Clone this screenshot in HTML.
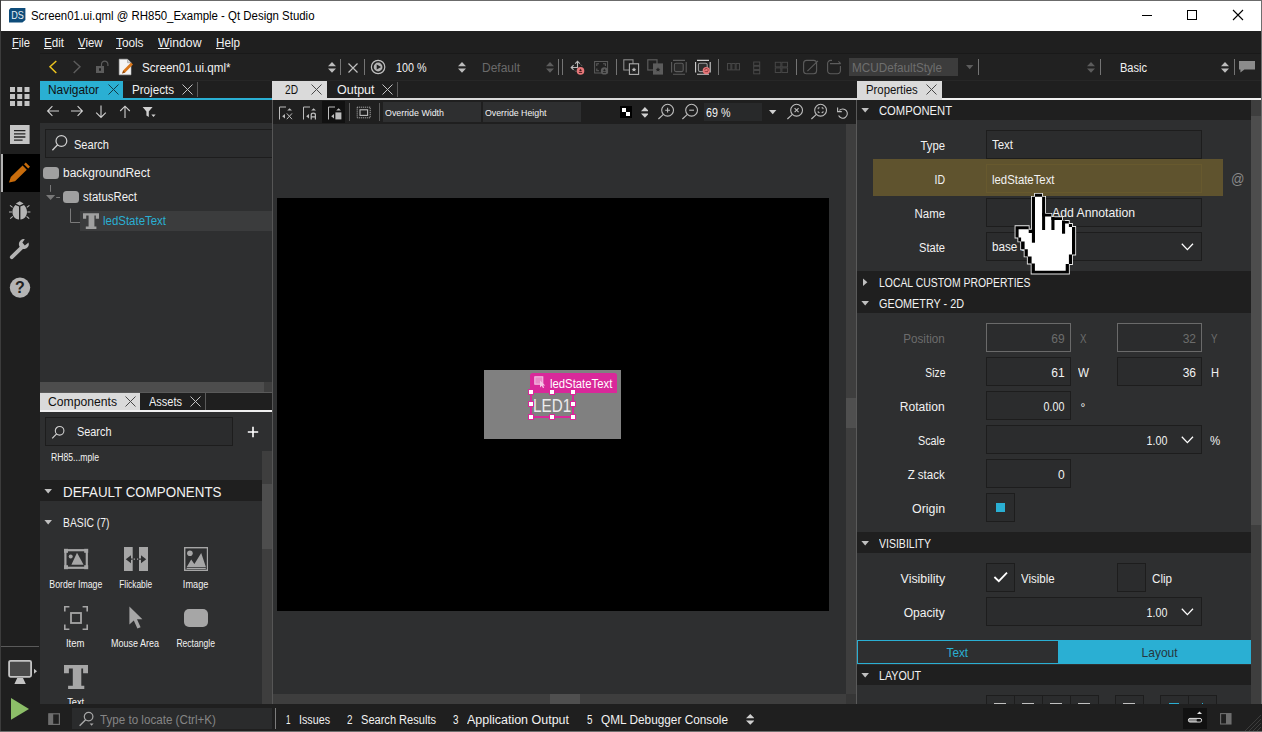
<!DOCTYPE html>
<html lang="en"><head><meta charset="utf-8"><title>Screen01.ui.qml @ RH850_Example - Qt Design Studio</title>
<style>
html,body{margin:0;padding:0;background:#1f1f1f;}
body{width:1262px;height:732px;position:relative;overflow:hidden;font-family:"Liberation Sans",sans-serif;}
body>div,body>svg,body>span{position:absolute;display:block;box-sizing:border-box;}
.t{white-space:pre;}
u{text-decoration:underline;text-underline-offset:1px;}
</style></head>
<body>
<div style="left:0px;top:0px;width:1262px;height:31px;background:#ffffff;"></div>
<div style="left:0px;top:0px;width:1262px;height:1px;background:#6b6b6b;"></div>
<svg style="left:9px;top:8px;" width="17" height="15" viewBox="0 0 17 15"><path d="M1.6 0H16.4V12L13.4 14.6H0V1.8Z" fill="#0e4c7a"/><text x="2.2" y="11.2" font-family="Liberation Sans,sans-serif" font-size="11.6" fill="#e8eef4" textLength="12.6" lengthAdjust="spacingAndGlyphs">DS</text></svg>
<span class="t" style="top:7.84px;font-size:12px;line-height:16px;color:#000;left:30.5px;transform-origin:0 50%;transform:scaleX(0.9524);">Screen01.ui.qml @ RH850_Example - Qt Design Studio</span>
<svg style="left:1140px;top:8px;" width="110" height="16" viewBox="0 0 110 16"><g stroke="#000" stroke-width="1" fill="none"><path d="M2 7.5H12"/><rect x="47.5" y="2.5" width="9" height="9"/><path d="M93 2L103 12M103 2L93 12" stroke-width="1.1"/></g></svg>
<div style="left:0px;top:31px;width:1262px;height:22px;background:#1f1f1f;"></div>
<span class="t" style="top:34.84px;font-size:12px;line-height:16px;color:#f2f2f2;left:12px;transform-origin:0 50%;transform:scaleX(0.9298);"><u>F</u>ile</span>
<span class="t" style="top:34.84px;font-size:12px;line-height:16px;color:#f2f2f2;left:44px;transform-origin:0 50%;transform:scaleX(0.9660);"><u>E</u>dit</span>
<span class="t" style="top:34.84px;font-size:12px;line-height:16px;color:#f2f2f2;left:78px;transform-origin:0 50%;transform:scaleX(0.9492);"><u>V</u>iew</span>
<span class="t" style="top:34.84px;font-size:12px;line-height:16px;color:#f2f2f2;left:116px;transform-origin:0 50%;transform:scaleX(0.9816);"><u>T</u>ools</span>
<span class="t" style="top:34.84px;font-size:12px;line-height:16px;color:#f2f2f2;left:158px;transform-origin:0 50%;transform:scaleX(1.0190);"><u>W</u>indow</span>
<span class="t" style="top:34.84px;font-size:12px;line-height:16px;color:#f2f2f2;left:216px;transform-origin:0 50%;transform:scaleX(0.9722);"><u>H</u>elp</span>
<div style="left:0px;top:53px;width:1262px;height:28px;background:#212121;"></div>
<div style="left:0px;top:53px;width:1262px;height:1px;background:#191919;"></div>
<div style="left:0px;top:80px;width:1262px;height:1px;background:#272727;"></div>
<div style="left:0px;top:53px;width:40px;height:28px;background:#1f1f1f;"></div>
<div style="left:0px;top:81px;width:40px;height:651px;background:#1f1f1f;"></div>
<div style="left:0px;top:0px;width:1px;height:732px;background:#3c3c3c;"></div>
<svg style="left:48px;top:59px;" width="12" height="16" viewBox="0 0 12 16"><path d="M8.3 2L2 7.7L8.3 14" stroke="#ebc31f" stroke-width="1.5" fill="none"/></svg>
<svg style="left:71px;top:59px;" width="12" height="16" viewBox="0 0 12 16"><path d="M2.7 2L9 7.7L2.7 14" stroke="#5c5c5c" stroke-width="1.4" fill="none"/></svg>
<svg style="left:94px;top:59px;" width="16" height="16" viewBox="0 0 16 16"><path d="M2 7H10V14H2Z M5 9.3V11.7H7V9.3Z" fill="#5c5c5c" fill-rule="evenodd"/><path d="M7.5 7V5.3A3.2 3.2 0 0 1 13.9 5.3V7" stroke="#5c5c5c" stroke-width="1.2" fill="none"/></svg>
<svg style="left:118px;top:58px;" width="17" height="18" viewBox="0 0 17 18"><path d="M1.2 1.2H9.5L13 4.7V16.8H1.2Z" fill="#f4f4f4" stroke="#bdbdbd" stroke-width=".6"/><path d="M9.5 1.2V4.7H13" fill="#d0d0d0" stroke="#9a9a9a" stroke-width=".6"/><path d="M4.2 15.4L5.2 12.4L13 4.6L15 6.6L7.2 14.4Z" fill="#d9761a"/><path d="M4.2 15.4L5.2 12.4L7.2 14.4Z" fill="#8a4a10"/></svg>
<span class="t" style="top:59.84px;font-size:12px;line-height:16px;color:#f2f2f2;left:142px;transform-origin:0 50%;transform:scaleX(0.9684);">Screen01.ui.qml*</span>
<svg style="left:327.5px;top:62px;" width="8" height="11" viewBox="0 0 8 11"><path d="M0 4.2L4.0 0L8 4.2Z M0 6.6L4.0 10.8L8 6.6Z" fill="#bcbcbc"/></svg>
<div style="left:340px;top:59px;width:1px;height:16px;background:#747474;"></div>
<svg style="left:347.5px;top:62.5px;overflow:visible;" width="10.0" height="10.0" viewBox="0 0 10.0 10.0"><path d="M.5 .5L9.5 9.5M9.5 .5L.5 9.5" stroke="#c0c0c0" stroke-width="1.2" fill="none"/></svg>
<div style="left:364px;top:59px;width:1px;height:16px;background:#747474;"></div>
<svg style="left:370px;top:59px;" width="16" height="16" viewBox="0 0 16 16"><circle cx="8.1" cy="8" r="6.7" stroke="#c0c0c0" stroke-width="1.2" fill="none"/><circle cx="8.1" cy="8" r="4.4" fill="#b4b4b4"/><path d="M6.7 5.4L11.2 8L6.7 10.6Z" fill="#222"/></svg>
<span class="t" style="top:59.84px;font-size:12px;line-height:16px;color:#f2f2f2;left:395.5px;transform-origin:0 50%;transform:scaleX(0.8962);">100 %</span>
<svg style="left:457.7px;top:62px;" width="8" height="11" viewBox="0 0 8 11"><path d="M0 4.2L4.0 0L8 4.2Z M0 6.6L4.0 10.8L8 6.6Z" fill="#bcbcbc"/></svg>
<span class="t" style="top:59.84px;font-size:12px;line-height:16px;color:#6a6a6a;left:482px;transform-origin:0 50%;">Default</span>
<svg style="left:545.9px;top:62px;" width="8" height="11" viewBox="0 0 8 11"><path d="M0 4.2L4.0 0L8 4.2Z M0 6.6L4.0 10.8L8 6.6Z" fill="#5c5c5c"/></svg>
<div style="left:558px;top:59px;width:1px;height:16px;background:#747474;"></div>
<div style="left:562px;top:59px;width:1px;height:16px;background:#747474;"></div>
<svg style="left:569px;top:58px;" width="18" height="18" viewBox="0 0 18 18"><g stroke="#bcbcbc" stroke-width="1.1" fill="none"><path d="M8.5 10V3.4M6.2 5.6L8.5 3.2L10.8 5.6"/><path d="M8.5 9.5H2.4M4.6 7.2L2.2 9.5L4.6 11.8"/><path d="M11.8 6.6L12.8 7.6M6 12.6L7 13.6" stroke-width="1" opacity=".7"/></g><circle cx="11.5" cy="12.9" r="3.8" fill="#e8787a"/><path d="M9.9 14.4H13.1" stroke="#3a1516" stroke-width=".9"/><path d="M11.5 10.6L12 11.7L13.1 11.9L12.3 12.7L11.5 13.2L10.7 12.7L9.9 11.9L11 11.7Z" fill="#3a1516"/></svg>
<svg style="left:593px;top:58px;" width="18" height="18" viewBox="0 0 18 18"><g stroke="#5c5c5c" stroke-width="1" fill="none"><rect x="1.6" y="3.5" width="13" height="11.5"/><path d="M3.8 8V5.8H6M10 5.8H12.4V8M3.8 10.6V12.8H6" stroke-width="1.1"/></g><circle cx="11.4" cy="12.9" r="3.6" fill="#5c5c5c"/><path d="M9.9 14.4H12.9" stroke="#222" stroke-width=".9"/><path d="M11.4 10.6L11.9 11.7L13 11.9L12.2 12.7L11.4 13.2L10.6 12.7L9.8 11.9L10.9 11.7Z" fill="#222"/></svg>
<div style="left:616px;top:59px;width:1px;height:16px;background:#747474;"></div>
<svg style="left:622px;top:58px;" width="18" height="18" viewBox="0 0 18 18"><g stroke-width="1.1" fill="none"><rect x="1.8" y="1.8" width="9.2" height="10.2" stroke="#8c8c8c"/><rect x="7.4" y="5.8" width="9.2" height="10.6" fill="#212121" stroke="#b0b0b0"/></g><path d="M12 9.2L12.7 10.8L14.4 10.9L13.1 12L13.5 13.6L12 12.7L10.5 13.6L10.9 12L9.6 10.9L11.3 10.8Z" fill="#bcbcbc"/></svg>
<svg style="left:646px;top:58px;" width="18" height="18" viewBox="0 0 18 18"><rect x="1.8" y="1.8" width="9.2" height="10.2" stroke="#5c5c5c" stroke-width="1.2" fill="none"/><rect x="7" y="5.4" width="10" height="11.2" fill="#5c5c5c"/><path d="M12 9.2L12.7 10.8L14.4 10.9L13.1 12L13.5 13.6L12 12.7L10.5 13.6L10.9 12L9.6 10.9L11.3 10.8Z" fill="#222"/></svg>
<svg style="left:670px;top:58px;" width="18" height="18" viewBox="0 0 18 18"><g stroke="#5c5c5c" stroke-width="1.1" fill="none"><path d="M3 2.4H15M3 16.2H15M1.6 4V14.6M16.2 4V14.6"/><rect x="4.4" y="5.2" width="8.8" height="8.4" rx="1.6" fill="#2a2a2a" stroke="#5c5c5c"/></g></svg>
<svg style="left:694px;top:58px;" width="18" height="18" viewBox="0 0 18 18"><g stroke="#d0d0d0" stroke-width="1.1" fill="none"><path d="M3 2.4H15M3 16.2H15M1.6 4V14.6M16.2 4V14.6"/><rect x="4.4" y="5.2" width="8.8" height="8.4" rx="1.6" fill="#2e2e2e" stroke="#9a9a9a"/></g></svg>
<svg style="left:702px;top:66px;" width="9" height="9" viewBox="0 0 9 9"><circle cx="4.3" cy="4.6" r="3.6" fill="#e8787a"/><path d="M2.7 5.6H5.9M2.7 4.2A1.7 1.7 0 1 1 5.3 5.5" stroke="#7a2a2c" stroke-width=".7" fill="none"/></svg>
<div style="left:718px;top:59px;width:1px;height:16px;background:#747474;"></div>
<svg style="left:726px;top:62px;" width="15" height="10" viewBox="0 0 15 10"><g stroke="#474747" stroke-width="1" fill="none"><rect x="1.5" y="1.5" width="3.4" height="6.4"/><rect x="5.8" y="1.5" width="3.4" height="6.4"/><rect x="10.1" y="1.5" width="3.4" height="6.4"/></g></svg>
<svg style="left:752px;top:61px;" width="10" height="14" viewBox="0 0 10 14"><g stroke="#474747" stroke-width="1" fill="none"><rect x="1.7" y="1" width="6" height="3.4"/><rect x="1.7" y="5.2" width="6" height="3.4"/><rect x="1.7" y="9.4" width="6" height="3.4"/></g></svg>
<svg style="left:774px;top:61px;" width="15" height="13" viewBox="0 0 15 13"><g stroke="#474747" stroke-width="1" fill="none"><rect x="1.3" y="1.3" width="5.6" height="4.6"/><rect x="7.9" y="1.3" width="5.6" height="4.6"/><rect x="1.3" y="6.9" width="5.6" height="4.6"/><rect x="7.9" y="6.9" width="5.6" height="4.6"/></g></svg>
<div style="left:796px;top:59px;width:1px;height:16px;background:#747474;"></div>
<svg style="left:802px;top:58px;" width="18" height="18" viewBox="0 0 18 18"><g stroke="#5c5c5c" stroke-width="1.1" fill="none"><rect x="1.6" y="2.4" width="13" height="13.4" rx="3"/><path d="M5.4 13.2L16 2.8"/></g></svg>
<svg style="left:826px;top:58px;" width="18" height="18" viewBox="0 0 18 18"><g stroke="#5c5c5c" stroke-width="1.1" fill="none"><path d="M14.4 8V12.8A3 3 0 0 1 11.4 15.8H4.6A3 3 0 0 1 1.6 12.8V5.4A3 3 0 0 1 4.6 2.4H6"/><path d="M4 5.6H14.6M12.4 3.4L14.8 5.6"/></g></svg>
<div style="left:849px;top:58px;width:109px;height:18px;background:#3c3c3c;"></div>
<span class="t" style="top:59.84px;font-size:12px;line-height:16px;color:#6e6e6e;left:851.5px;transform-origin:0 50%;transform:scaleX(0.9779);">MCUDefaultStyle</span>
<svg style="left:966px;top:65px;" width="8" height="5" viewBox="0 0 8 5"><path d="M0 0H7.4L3.7 4.2Z" fill="#5c5c5c"/></svg>
<div style="left:978px;top:59px;width:1px;height:16px;background:#747474;"></div>
<svg style="left:1087px;top:62px;" width="8" height="11" viewBox="0 0 8 11"><path d="M0 4.2L4.0 0L8 4.2Z M0 6.6L4.0 10.8L8 6.6Z" fill="#5c5c5c"/></svg>
<div style="left:1100px;top:59px;width:1px;height:16px;background:#747474;"></div>
<span class="t" style="top:59.84px;font-size:12px;line-height:16px;color:#f2f2f2;left:1120px;transform-origin:0 50%;transform:scaleX(0.9201);">Basic</span>
<svg style="left:1221px;top:62px;" width="8" height="11" viewBox="0 0 8 11"><path d="M0 4.2L4.0 0L8 4.2Z M0 6.6L4.0 10.8L8 6.6Z" fill="#bcbcbc"/></svg>
<div style="left:1234px;top:59px;width:1px;height:16px;background:#747474;"></div>
<svg style="left:1238px;top:60px;" width="18" height="14" viewBox="0 0 18 14"><path d="M1 1H17V9.4H6.4L2.4 12.6V9.4H1Z" fill="#8c8c8c"/></svg>
<div style="left:40px;top:81px;width:1222px;height:19px;background:#1f1f1f;"></div>
<div style="left:40px;top:81px;width:83px;height:17.5px;background:#2aafd3;"></div>
<div style="left:40px;top:97.5px;width:232px;height:2.5px;background:#2aafd3;"></div>
<span class="t" style="top:81.84px;font-size:12px;line-height:16px;color:#101010;left:48px;transform-origin:0 50%;transform:scaleX(0.9930);">Navigator</span>
<svg style="left:108px;top:84px;overflow:visible;" width="11" height="11" viewBox="0 0 11 11"><path d="M.5 .5L10.5 10.5M10.5 .5L.5 10.5" stroke="#123c48" stroke-width="1" fill="none"/></svg>
<span class="t" style="top:81.84px;font-size:12px;line-height:16px;color:#f2f2f2;left:132px;transform-origin:0 50%;transform:scaleX(0.9686);">Projects</span>
<svg style="left:182px;top:84px;overflow:visible;" width="11" height="11" viewBox="0 0 11 11"><path d="M.5 .5L10.5 10.5M10.5 .5L.5 10.5" stroke="#c4c4c4" stroke-width="1" fill="none"/></svg>
<div style="left:197px;top:82px;width:1px;height:15px;background:#5a5a5a;"></div>
<div style="left:272px;top:98px;width:585px;height:2px;background:#dadada;"></div>
<div style="left:272px;top:81px;width:55px;height:19px;background:#dadada;"></div>
<span class="t" style="top:81.84px;font-size:12px;line-height:16px;color:#101010;left:284.5px;transform-origin:0 50%;transform:scaleX(0.8473);">2D</span>
<svg style="left:311px;top:84px;overflow:visible;" width="11" height="11" viewBox="0 0 11 11"><path d="M.5 .5L10.5 10.5M10.5 .5L.5 10.5" stroke="#484848" stroke-width="1" fill="none"/></svg>
<span class="t" style="top:81.84px;font-size:12px;line-height:16px;color:#f2f2f2;left:336.5px;transform-origin:0 50%;transform:scaleX(1.0408);">Output</span>
<svg style="left:381.5px;top:84px;overflow:visible;" width="11.0" height="11" viewBox="0 0 11.0 11"><path d="M.5 .5L10.5 10.5M10.5 .5L.5 10.5" stroke="#c4c4c4" stroke-width="1" fill="none"/></svg>
<div style="left:397px;top:82px;width:1px;height:15px;background:#5a5a5a;"></div>
<div style="left:857px;top:98px;width:404px;height:2px;background:#f0f0f0;"></div>
<div style="left:857px;top:81px;width:85px;height:19px;background:#dadada;"></div>
<span class="t" style="top:81.84px;font-size:12px;line-height:16px;color:#101010;left:865.7px;transform-origin:0 50%;transform:scaleX(0.9469);">Properties</span>
<svg style="left:926px;top:84px;overflow:visible;" width="11" height="11" viewBox="0 0 11 11"><path d="M.5 .5L10.5 10.5M10.5 .5L.5 10.5" stroke="#484848" stroke-width="1" fill="none"/></svg>
<div style="left:40px;top:100px;width:232px;height:23px;background:#1f1f1f;"></div>
<svg style="left:46px;top:104px;" width="14" height="14" viewBox="0 0 14 14"><path d="M13 7H1.6M6.4 2.2L1.6 7L6.4 11.8" stroke="#d0d0d0" stroke-width="1.1" fill="none"/></svg>
<svg style="left:69.5px;top:104px;" width="14" height="14" viewBox="0 0 14 14"><path d="M1 7H12.4M7.6 2.2L12.4 7L7.6 11.8" stroke="#d0d0d0" stroke-width="1.1" fill="none"/></svg>
<svg style="left:93.5px;top:105px;" width="14" height="14" viewBox="0 0 14 14"><path d="M7 .6V12.4M2.2 7.6L7 12.4L11.8 7.6" stroke="#d0d0d0" stroke-width="1.1" fill="none"/></svg>
<svg style="left:117.5px;top:105px;" width="14" height="14" viewBox="0 0 14 14"><path d="M7 13V1.2M2.2 6L7 1.2L11.8 6" stroke="#d0d0d0" stroke-width="1.1" fill="none"/></svg>
<svg style="left:142px;top:106px;" width="15" height="13" viewBox="0 0 15 13"><path d="M.6 1H10.6L6.8 5.6V11L4.4 9.4V5.6Z" fill="#d0d0d0"/><path d="M9.4 8.6H13.6L11.5 11Z" fill="#d0d0d0"/></svg>
<div style="left:40px;top:123px;width:232px;height:269px;background:#2e2f30;"></div>
<div style="left:45px;top:129px;width:232px;height:29px;background:#2b2c2d;border:1px solid #1d1d1d;"></div>
<div style="left:272px;top:100px;width:1px;height:632px;background:#565656;"></div>
<svg style="left:51px;top:134px;" width="18" height="18" viewBox="0 0 18 18"><circle cx="10.4" cy="7" r="5.4" stroke="#d0d0d0" stroke-width="1.2" fill="none"/><path d="M6.6 10.8L1.4 16.2" stroke="#d0d0d0" stroke-width="1.3"/></svg>
<span class="t" style="top:136.84px;font-size:12px;line-height:16px;color:#f2f2f2;left:74px;transform-origin:0 50%;transform:scaleX(0.9203);">Search</span>
<div style="left:43px;top:167px;width:16px;height:12px;background:#a0a0a0;border-radius:3.5px;"></div>
<span class="t" style="top:164.84px;font-size:12px;line-height:16px;color:#f2f2f2;left:63px;transform-origin:0 50%;transform:scaleX(0.9955);">backgroundRect</span>
<svg style="left:44px;top:185px;" width="20" height="18" viewBox="0 0 20 18"><path d="M6.5 0V6.8" stroke="#787878" stroke-width="1"/><path d="M2 10H11.2L6.6 15Z" fill="#787878"/><path d="M12.2 12.5H16" stroke="#787878" stroke-width="1"/></svg>
<div style="left:63px;top:191px;width:16px;height:12px;background:#a0a0a0;border-radius:3.5px;"></div>
<span class="t" style="top:188.84px;font-size:12px;line-height:16px;color:#f2f2f2;left:83px;transform-origin:0 50%;transform:scaleX(0.9523);">statusRect</span>
<div style="left:80px;top:211px;width:192px;height:20px;background:#3b3c3d;"></div>
<svg style="left:66px;top:207px;" width="16" height="18" viewBox="0 0 16 18"><path d="M4.5 1.5V15.5H14" stroke="#7a7a7a" stroke-width="1" fill="none"/></svg>
<svg style="left:83px;top:213px;" width="16" height="16" viewBox="0 0 16 16"><path d="M0 .2H16V5.8H12.8V2.6H11.4V13.6H13.4V16H2.8V13.6H5.6V2.6H3.2V5.8H0Z" fill="#a0a0a0"/></svg>
<span class="t" style="top:213.34px;font-size:12px;line-height:16px;color:#2aafd3;left:103px;transform-origin:0 50%;transform:scaleX(0.9539);">ledStateText</span>
<div style="left:40px;top:382px;width:224px;height:10px;background:#4d4d4d;"></div>
<div style="left:264px;top:382px;width:8px;height:10px;background:#3e3e3e;"></div>
<div style="left:40px;top:392px;width:232px;height:1px;background:#5a5a5a;"></div>
<div style="left:40px;top:393px;width:232px;height:17px;background:#1f1f1f;"></div>
<div style="left:40px;top:393px;width:100px;height:17px;background:#dadada;"></div>
<div style="left:40px;top:410px;width:232px;height:2px;background:#f0f0f0;"></div>
<span class="t" style="top:394.44px;font-size:12px;line-height:16px;color:#101010;left:48px;transform-origin:0 50%;transform:scaleX(1.0140);">Components</span>
<svg style="left:125px;top:395.5px;overflow:visible;" width="11" height="11.0" viewBox="0 0 11 11.0"><path d="M.5 .5L10.5 10.5M10.5 .5L.5 10.5" stroke="#484848" stroke-width="1" fill="none"/></svg>
<span class="t" style="top:394.44px;font-size:12px;line-height:16px;color:#f2f2f2;left:149px;transform-origin:0 50%;transform:scaleX(0.9163);">Assets</span>
<svg style="left:189.5px;top:395.5px;overflow:visible;" width="11.0" height="11.0" viewBox="0 0 11.0 11.0"><path d="M.5 .5L10.5 10.5M10.5 .5L.5 10.5" stroke="#c4c4c4" stroke-width="1" fill="none"/></svg>
<div style="left:205px;top:393px;width:1px;height:17px;background:#5a5a5a;"></div>
<div style="left:40px;top:412px;width:232px;height:292px;background:#2e2f30;"></div>
<div style="left:45px;top:417px;width:188px;height:29px;background:#2b2c2d;border:1px solid #1d1d1d;"></div>
<svg style="left:51px;top:425px;" width="15" height="15" viewBox="0 0 15 15"><circle cx="8.6" cy="5.8" r="4.3" stroke="#d0d0d0" stroke-width="1.1" fill="none"/><path d="M5.6 8.8L1.2 13.4" stroke="#d0d0d0" stroke-width="1.2"/></svg>
<span class="t" style="top:423.84px;font-size:12px;line-height:16px;color:#f2f2f2;left:77px;transform-origin:0 50%;transform:scaleX(0.9071);">Search</span>
<svg style="left:247px;top:426px;" width="12" height="12" viewBox="0 0 12 12"><path d="M6 .8V11.2M.8 6H11.2" stroke="#fff" stroke-width="1.6"/></svg>
<span class="t" style="top:450.54px;font-size:10px;line-height:13px;color:#f2f2f2;left:51px;transform-origin:0 50%;transform:scaleX(0.8636);">RH85...mple</span>
<div style="left:262px;top:451px;width:10px;height:253px;background:#3e3e3e;"></div>
<div style="left:262px;top:484px;width:10px;height:65px;background:#4d4d4d;"></div>
<div style="left:40px;top:480px;width:222px;height:21px;background:#1f1f1f;"></div>
<svg style="left:44px;top:489px;" width="9" height="5" viewBox="0 0 9 5"><path d="M.4 0H8L4.2 4.4Z" fill="#c0c0c0"/></svg>
<span class="t" style="top:483.44px;font-size:14.6px;line-height:19px;color:#f2f2f2;left:62.5px;transform-origin:0 50%;transform:scaleX(0.9162);">DEFAULT COMPONENTS</span>
<svg style="left:44px;top:520px;" width="9" height="5" viewBox="0 0 9 5"><path d="M.4 0H8L4.2 4.4Z" fill="#c0c0c0"/></svg>
<span class="t" style="top:514.63px;font-size:12.6px;line-height:16px;color:#f2f2f2;left:62.5px;transform-origin:0 50%;transform:scaleX(0.8203);">BASIC (7)</span>
<svg style="left:63px;top:547px;" width="26" height="24" viewBox="0 0 26 24"><rect x="2.4" y="3.2" width="21.4" height="17.6" stroke="#a6a6a6" stroke-width="2.2" fill="none"/><g fill="#a6a6a6"><rect x="1" y="1.8" width="4" height="4"/><rect x="21.2" y="1.8" width="4" height="4"/><rect x="1" y="18.2" width="4" height="4"/><rect x="21.2" y="18.2" width="4" height="4"/><circle cx="7.7" cy="9.6" r="2"/><path d="M8.4 17.8L14 5.8L20.6 17.8Z"/></g></svg>
<svg style="left:124px;top:547px;" width="24" height="24" viewBox="0 0 24 24"><path d="M0 0H8.7V24H0Z M15 0H24V24H15Z" fill="#a6a6a6"/><path d="M7 8.2V16.2L1.8 12.2Z M17 8.2V16.2L22.2 12.2Z" fill="#2e2f30"/><path d="M6.6 12.2H8.7M15 12.2H17.4" stroke="#2e2f30" stroke-width="1.3"/><path d="M9.6 12.2H11M13 12.2H14.2" stroke="#a6a6a6" stroke-width="1.2"/></svg>
<svg style="left:184px;top:547px;" width="24" height="24" viewBox="0 0 24 24"><rect x=".7" y=".7" width="22.8" height="22.6" stroke="#a6a6a6" stroke-width="1.4" fill="none"/><g fill="#a6a6a6"><circle cx="5.9" cy="6.3" r="2.8"/><path d="M2.6 20.2L7.2 12.4L10.4 17L17.2 6L22 20.2Z"/><rect x="2.6" y="21" width="19.2" height="1"/></g></svg>
<svg style="left:64px;top:606px;" width="24" height="24" viewBox="0 0 24 24"><g stroke="#a6a6a6" stroke-width="1.6" fill="none"><path d="M.8 5.4V.8H5.4M18.6 .8H23.2V5.4M23.2 18.6V23.2H18.6M5.4 23.2H.8V18.6"/><rect x="7" y="7" width="10" height="10" stroke-width="1.8"/></g></svg>
<svg style="left:128px;top:605px;" width="16" height="26" viewBox="0 0 16 26"><path d="M1.4 1.4V19.4L5.8 15.4L9.4 23.6L12.6 22.2L9 14.2H14.4Z" fill="#a6a6a6"/></svg>
<div style="left:184px;top:609px;width:24px;height:18px;background:#a6a6a6;border-radius:5px;"></div>
<svg style="left:64px;top:664.5px;" width="24" height="24" viewBox="0 0 24 24"><path d="M0 0H24V8.3H19.1V3.4H17.3V20.7H20.3V24H4.1V20.7H8.8V3.4H4.9V8.3H0Z" fill="#a6a6a6"/></svg>
<span class="t" style="top:576.86px;font-size:10.5px;line-height:14px;color:#f2f2f2;left:43.69px;transform-origin:50% 50%;transform:scaleX(0.8330);">Border Image</span>
<span class="t" style="top:576.86px;font-size:10.5px;line-height:14px;color:#f2f2f2;left:114.78px;transform-origin:50% 50%;transform:scaleX(0.7964);">Flickable</span>
<span class="t" style="top:576.86px;font-size:10.5px;line-height:14px;color:#f2f2f2;left:180.71px;transform-origin:50% 50%;transform:scaleX(0.8737);">Image</span>
<span class="t" style="top:635.86px;font-size:10.5px;line-height:14px;color:#f2f2f2;left:64.59px;transform-origin:50% 50%;transform:scaleX(0.9059);">Item</span>
<span class="t" style="top:635.86px;font-size:10.5px;line-height:14px;color:#f2f2f2;left:106.98px;transform-origin:50% 50%;transform:scaleX(0.8564);">Mouse Area</span>
<span class="t" style="top:635.86px;font-size:10.5px;line-height:14px;color:#f2f2f2;left:171.66px;transform-origin:50% 50%;transform:scaleX(0.8143);">Rectangle</span>
<span class="t" style="top:695.36px;font-size:10.5px;line-height:14px;color:#f2f2f2;left:65.87px;transform-origin:50% 50%;transform:scaleX(0.8824);">Text</span>
<svg style="left:10px;top:87px;" width="20" height="19" viewBox="0 0 20 19"><rect x="0" y="0" width="5" height="5" fill="#c4c4c4"/><rect x="0" y="7" width="5" height="5" fill="#c4c4c4"/><rect x="0" y="14" width="5" height="5" fill="#c4c4c4"/><rect x="7.2" y="0" width="5" height="5" fill="#c4c4c4"/><rect x="7.2" y="7" width="5" height="5" fill="#c4c4c4"/><rect x="7.2" y="14" width="5" height="5" fill="#c4c4c4"/><rect x="14.5" y="0" width="5" height="5" fill="#c4c4c4"/><rect x="14.5" y="7" width="5" height="5" fill="#c4c4c4"/><rect x="14.5" y="14" width="5" height="5" fill="#c4c4c4"/></svg>
<svg style="left:10px;top:125px;" width="20" height="19" viewBox="0 0 20 19"><rect width="19.6" height="19" fill="#c4c4c4"/><path d="M4 5.6H15.4M4 8.8H15.4M4 12H15.4M4 15.2H12.6" stroke="#222" stroke-width="1.3"/></svg>
<div style="left:1px;top:154px;width:39px;height:38px;background:#000;"></div>
<div style="left:1px;top:154px;width:2px;height:38px;background:#b4b4b4;"></div>
<svg style="left:8px;top:162px;" width="24" height="22" viewBox="0 0 24 22"><path d="M1 20.6L2.8 15L14.6 3.6L18.8 7.8L7 19.2Z M16 2.2L17.8 .6L22 4.8L20.2 6.4Z" fill="#c86c0c"/></svg>
<svg style="left:9px;top:200px;" width="22" height="21" viewBox="0 0 22 21"><g fill="#b4b4b4"><path d="M10.7 1.2L14.6 3.4L10.7 5.4L6.8 3.4Z"/><path d="M10 6.6V19.6C5.6 19 3.4 15.6 3.4 12C3.4 8.6 5 6.6 6.4 5Z M11.4 6.6V19.6C15.8 19 18 15.6 18 12C18 8.6 16.4 6.6 15 5Z"/></g><g stroke="#b4b4b4" stroke-width="1.1"><path d="M3.6 7.4L1 5.4M3 12H0M3.8 16.4L1.2 18.6M17.8 7.4L20.4 5.4M18.4 12H21.4M17.6 16.4L20.2 18.6"/></g></svg>
<svg style="left:9px;top:238px;" width="22" height="22" viewBox="0 0 22 22"><path d="M2.8 19.2L12.6 9.6" stroke="#b4b4b4" stroke-width="3.8" stroke-linecap="round"/><path d="M19.6 4.6A5 5 0 1 1 15.8 1.2L13.4 4.6L15.8 7.4L19.6 4.6Z" fill="#b4b4b4"/></svg>
<svg style="left:9px;top:277px;" width="22" height="22" viewBox="0 0 22 22"><circle cx="11" cy="10.6" r="10.2" fill="#b4b4b4"/><text x="11" y="16" font-family="Liberation Sans,sans-serif" font-size="16" font-weight="700" fill="#222" text-anchor="middle">?</text></svg>
<div style="left:1px;top:646px;width:38px;height:1px;background:#5a5a5a;"></div>
<svg style="left:7px;top:659px;" width="32" height="26" viewBox="0 0 32 26"><rect x="2.1" y="1.8" width="22" height="16" rx="1.5" fill="#4a4a4a" stroke="#c4c4c4" stroke-width="1.8"/><path d="M10.2 19L7.4 25H18.8L16 19Z" fill="#c4c4c4"/><path d="M27 9.8V14.8L30 12.3Z" fill="#c4c4c4"/></svg>
<svg style="left:10px;top:697px;" width="20" height="24" viewBox="0 0 20 24"><path d="M1 1V22.8L19 11.9Z" fill="#8cbe68"/></svg>
<div style="left:273px;top:100px;width:583px;height:24px;background:#1f1f1f;"></div>
<svg style="left:278px;top:104.5px;" width="16" height="16" viewBox="0 0 16 16"><g stroke="#bdbdbd" stroke-width="1" fill="none"><path d="M1.5 14.5V2H8" /></g><path d="M4.2 11.2L7 9V13.4Z" fill="#bdbdbd"/><path d="M9.2 5.6L11.6 3.2L14 5.6Z" fill="#bdbdbd"/><path d="M8.8 8.4L14 14.2M14 8.4L8.8 14.2" stroke="#bdbdbd" stroke-width="1"/></svg>
<svg style="left:302px;top:104.5px;" width="16" height="16" viewBox="0 0 16 16"><g stroke="#bdbdbd" stroke-width="1" fill="none"><path d="M1.5 14.5V2H8" /></g><path d="M4.2 11.2L7 9V13.4Z" fill="#bdbdbd"/><path d="M9.2 5.6L11.6 3.2L14 5.6Z" fill="#bdbdbd"/><path d="M9.2 14.4V10Q9.2 8.2 11.3 8.2Q13.4 8.2 13.4 10V14.4M9.2 11.8H13.4" stroke="#bdbdbd" stroke-width="1.2" fill="none"/></svg>
<div style="left:322px;top:101px;width:23px;height:22px;background:#111;"></div>
<svg style="left:326.5px;top:104.5px;" width="16" height="16" viewBox="0 0 16 16"><g stroke="#bdbdbd" stroke-width="1" fill="none"><path d="M1.5 14.5V2H8" /></g><path d="M4.2 11.2L7 9V13.4Z" fill="#bdbdbd"/><path d="M9.2 5.6L11.6 3.2L14 5.6Z" fill="#bdbdbd"/><rect x="8.4" y="7.4" width="6" height="7" fill="#bdbdbd"/></svg>
<div style="left:349px;top:103px;width:1px;height:18px;background:#5a5a5a;"></div>
<svg style="left:356px;top:106px;" width="16" height="13" viewBox="0 0 16 13"><rect x="1.2" y="1.2" width="13" height="10.6" stroke="#bdbdbd" stroke-width="1" stroke-dasharray="1 1" fill="none"/><rect x="4" y="3.8" width="7.6" height="5.6" stroke="#bdbdbd" stroke-width="1.1" fill="none"/></svg>
<div style="left:379px;top:103px;width:1px;height:18px;background:#5a5a5a;"></div>
<div style="left:383px;top:102px;width:98px;height:20px;background:#2e2f30;"></div>
<div style="left:483px;top:102px;width:98px;height:20px;background:#2e2f30;"></div>
<span class="t" style="top:106.87px;font-size:9.6px;line-height:12px;color:#f2f2f2;left:385px;transform-origin:0 50%;transform:scaleX(0.9221);">Override Width</span>
<span class="t" style="top:106.87px;font-size:9.6px;line-height:12px;color:#f2f2f2;left:485px;transform-origin:0 50%;transform:scaleX(0.9153);">Override Height</span>
<svg style="left:620px;top:106px;" width="12" height="12" viewBox="0 0 12 12"><rect width="12" height="12" fill="#000"/><rect x="2" y="2" width="4" height="4" fill="#fff"/><rect x="6" y="6" width="4" height="4" fill="#fff"/></svg>
<svg style="left:640.7px;top:107px;" width="7.8" height="11" viewBox="0 0 7.8 11"><path d="M0 4.2L3.9 0L7.8 4.2Z M0 6.6L3.9 10.8L7.8 6.6Z" fill="#d0d0d0"/></svg>
<svg style="left:657px;top:103px;" width="18" height="18" viewBox="0 0 18 18"><g stroke="#bdbdbd" stroke-width="1.1" fill="none"><circle cx="10.6" cy="7.2" r="5.9"/><path d="M6.4 11.4L1.4 16"/><g transform="translate(0 .2)"><path d="M10.6 4.6V9.4M8.2 7H13"/></g></g></svg>
<svg style="left:681px;top:103px;" width="18" height="18" viewBox="0 0 18 18"><g stroke="#bdbdbd" stroke-width="1.1" fill="none"><circle cx="10.6" cy="7.2" r="5.9"/><path d="M6.4 11.4L1.4 16"/><g transform="translate(0 .2)"><path d="M8.2 7H13"/></g></g></svg>
<div style="left:704px;top:103px;width:58px;height:18px;background:#28292a;"></div>
<span class="t" style="top:104.50px;font-size:12.4px;line-height:16px;color:#f2f2f2;left:706.4px;transform-origin:0 50%;transform:scaleX(0.8637);">69 %</span>
<svg style="left:769.4px;top:110px;" width="8" height="5" viewBox="0 0 8 5"><path d="M0 0H7.4L3.7 4.2Z" fill="#d0d0d0"/></svg>
<svg style="left:786px;top:103px;" width="18" height="18" viewBox="0 0 18 18"><g stroke="#bdbdbd" stroke-width="1.1" fill="none"><circle cx="10.6" cy="7.2" r="5.9"/><path d="M6.4 11.4L1.4 16"/><g transform="translate(0 .2)"><path d="M8.6 5L12.6 9M12.6 5L8.6 9"/></g></g></svg>
<svg style="left:810px;top:103px;" width="18" height="18" viewBox="0 0 18 18"><g stroke="#bdbdbd" stroke-width="1.1" fill="none"><circle cx="10.6" cy="7.2" r="5.9"/><path d="M6.4 11.4L1.4 16"/><g transform="translate(0 .2)"><path d="M8.2 6V4.6H9.6M11.6 4.6H13V6M13 8V9.4H11.6M9.6 9.4H8.2V8" stroke-width="1"/></g></g></svg>
<svg style="left:837px;top:105.5px;" width="12" height="14" viewBox="0 0 12 14"><path d="M2.4 4.4A4.6 4.6 0 1 1 1.6 9.6" stroke="#bdbdbd" stroke-width="1.1" fill="none"/><path d="M.6 1.4V5.6H4.8" stroke="#bdbdbd" stroke-width="1.1" fill="none"/></svg>
<div style="left:273px;top:124px;width:583px;height:570px;background:#2e2f30;"></div>
<div style="left:277px;top:198px;width:552px;height:413px;background:#000;"></div>
<div style="left:484px;top:370px;width:137px;height:69px;background:#808080;"></div>
<div style="left:530px;top:373px;width:87px;height:20px;background:#d9289a;border-radius:2.5px 2.5px 0 0;"></div>
<svg style="left:534px;top:376px;" width="12" height="12" viewBox="0 0 12 12"><rect x=".8" y=".8" width="8" height="7.4" fill="#e98ac8" stroke="#f6c6e6" stroke-width="1"/><path d="M6 4.6V11.4L7.8 9.8L9 12.2L10.2 11.6L9 9.4H11.2Z" fill="#f6c6e6"/></svg>
<span class="t" style="top:376.04px;font-size:12px;line-height:16px;color:#fff;left:549.7px;transform-origin:0 50%;transform:scaleX(0.9433);">ledStateText</span>
<span class="t" style="top:394.60px;font-size:17.6px;line-height:23px;color:#ececec;left:532.6px;transform-origin:0 50%;transform:scaleX(0.8656);">LED1</span>
<div style="left:530.2px;top:391.2px;width:43.6px;height:26.6px;border:2px solid #d9289a;"></div>
<div style="left:528px;top:389px;width:6px;height:6px;background:#fff;border:1px solid #d9289a;"></div>
<div style="left:528px;top:401px;width:6px;height:6px;background:#fff;border:1px solid #d9289a;"></div>
<div style="left:528px;top:414px;width:6px;height:6px;background:#fff;border:1px solid #d9289a;"></div>
<div style="left:549px;top:389px;width:6px;height:6px;background:#fff;border:1px solid #d9289a;"></div>
<div style="left:549px;top:414px;width:6px;height:6px;background:#fff;border:1px solid #d9289a;"></div>
<div style="left:570px;top:389px;width:6px;height:6px;background:#fff;border:1px solid #d9289a;"></div>
<div style="left:570px;top:401px;width:6px;height:6px;background:#fff;border:1px solid #d9289a;"></div>
<div style="left:570px;top:414px;width:6px;height:6px;background:#fff;border:1px solid #d9289a;"></div>
<div style="left:846px;top:124px;width:10px;height:570px;background:#3e3e3e;"></div>
<div style="left:846px;top:398px;width:10px;height:30px;background:#4f4f4f;"></div>
<div style="left:273px;top:694px;width:573px;height:10px;background:#3e3e3e;"></div>
<div style="left:549.5px;top:694px;width:30px;height:10px;background:#4f4f4f;"></div>
<div style="left:846px;top:694px;width:10px;height:10px;background:#363636;"></div>
<div style="left:856px;top:100px;width:1px;height:604px;background:#5a5a5a;"></div>
<div style="left:857px;top:100px;width:394px;height:604px;background:#2e2f30;"></div>
<div style="left:857px;top:100px;width:394px;height:20px;background:#1f1f1f;"></div>
<svg style="left:861px;top:108.0px;" width="9" height="5" viewBox="0 0 9 5"><path d="M.4 0H8L4.2 4.4Z" fill="#c0c0c0"/></svg>
<span class="t" style="top:102.74px;font-size:12.3px;line-height:16px;color:#f2f2f2;left:879px;transform-origin:0 50%;transform:scaleX(0.9132);">COMPONENT</span>
<div style="left:986px;top:130px;width:216px;height:29px;background:#2b2c2d;border:1px solid #1d1d1d;"></div>
<span class="t" style="top:137.84px;font-size:12px;line-height:16px;color:#f2f2f2;right:317px;transform-origin:100% 50%;transform:scaleX(0.9417);">Type</span>
<span class="t" style="top:136.84px;font-size:12px;line-height:16px;color:#f2f2f2;left:992px;transform-origin:0 50%;transform:scaleX(0.9539);">Text</span>
<div style="left:873px;top:159px;width:350px;height:37px;background:#5f532e;"></div>
<div style="left:986px;top:164px;width:216px;height:29px;background:#5f532e;border:1px solid #67592e;"></div>
<span class="t" style="top:171.84px;font-size:12px;line-height:16px;color:#f2f2f2;right:317px;transform-origin:100% 50%;transform:scaleX(0.8750);">ID</span>
<span class="t" style="top:171.84px;font-size:12px;line-height:16px;color:#f2f2f2;left:992px;transform-origin:0 50%;transform:scaleX(0.9463);">ledStateText</span>
<span class="t" style="top:169.65px;font-size:14px;line-height:18px;color:#8a8a8a;left:1230.5px;transform-origin:0 50%;transform:scaleX(0.9495);">@</span>
<div style="left:986px;top:198px;width:216px;height:29px;background:#2b2c2d;border:1px solid #1d1d1d;"></div>
<span class="t" style="top:206.34px;font-size:12px;line-height:16px;color:#f2f2f2;right:317px;transform-origin:100% 50%;transform:scaleX(0.9527);">Name</span>
<span class="t" style="top:204.70px;font-size:12.4px;line-height:16px;color:#f2f2f2;left:1052px;transform-origin:0 50%;transform:scaleX(0.9874);">Add Annotation</span>
<div style="left:986px;top:232px;width:216px;height:29px;background:#2b2c2d;border:1px solid #1d1d1d;"></div>
<span class="t" style="top:239.84px;font-size:12px;line-height:16px;color:#f2f2f2;right:317px;transform-origin:100% 50%;transform:scaleX(0.9275);">State</span>
<span class="t" style="top:239.34px;font-size:12px;line-height:16px;color:#f2f2f2;left:992px;transform-origin:0 50%;transform:scaleX(0.9752);">base state</span>
<svg style="left:1181px;top:243px;" width="13" height="8" viewBox="0 0 13 8"><path d="M.8 .8L6.4 6.6L12 .8" stroke="#fff" stroke-width="1.3" fill="none"/></svg>
<div style="left:857px;top:271px;width:394px;height:21px;background:#1f1f1f;"></div>
<svg style="left:863px;top:277.5px;" width="5" height="9" viewBox="0 0 5 9"><path d="M0 .4V8L4.4 4.2Z" fill="#c0c0c0"/></svg>
<span class="t" style="top:274.74px;font-size:12.3px;line-height:16px;color:#f2f2f2;left:879px;transform-origin:0 50%;transform:scaleX(0.8473);">LOCAL CUSTOM PROPERTIES</span>
<div style="left:857px;top:292px;width:394px;height:21px;background:#1f1f1f;"></div>
<svg style="left:861px;top:300.5px;" width="9" height="5" viewBox="0 0 9 5"><path d="M.4 0H8L4.2 4.4Z" fill="#c0c0c0"/></svg>
<span class="t" style="top:296.04px;font-size:12.3px;line-height:16px;color:#f2f2f2;left:879px;transform-origin:0 50%;transform:scaleX(0.8801);">GEOMETRY - 2D</span>
<div style="left:986px;top:323px;width:85px;height:29px;background:#2b2c2d;border:1px solid #6a6a6a;"></div>
<div style="left:1117px;top:323px;width:85px;height:29px;background:#2b2c2d;border:1px solid #6a6a6a;"></div>
<span class="t" style="top:331.34px;font-size:12px;line-height:16px;color:#6c6c6c;right:317px;transform-origin:100% 50%;transform:scaleX(0.9718);">Position</span>
<span class="t" style="top:331.34px;font-size:12px;line-height:16px;color:#6c6c6c;right:197.29999999999995px;transform-origin:100% 50%;">69</span>
<span class="t" style="top:331.34px;font-size:12px;line-height:16px;color:#6c6c6c;left:1079.5px;transform-origin:0 50%;transform:scaleX(0.8109);">X</span>
<span class="t" style="top:331.34px;font-size:12px;line-height:16px;color:#6c6c6c;right:66px;transform-origin:100% 50%;">32</span>
<span class="t" style="top:331.34px;font-size:12px;line-height:16px;color:#6c6c6c;left:1210.5px;transform-origin:0 50%;transform:scaleX(0.8109);">Y</span>
<div style="left:986px;top:357px;width:85px;height:29px;background:#2b2c2d;border:1px solid #1d1d1d;"></div>
<div style="left:1117px;top:357px;width:85px;height:29px;background:#2b2c2d;border:1px solid #1d1d1d;"></div>
<span class="t" style="top:365.34px;font-size:12px;line-height:16px;color:#f2f2f2;right:317px;transform-origin:100% 50%;transform:scaleX(0.8568);">Size</span>
<span class="t" style="top:365.34px;font-size:12px;line-height:16px;color:#f2f2f2;right:197.29999999999995px;transform-origin:100% 50%;">61</span>
<span class="t" style="top:365.34px;font-size:12px;line-height:16px;color:#f2f2f2;left:1078px;transform-origin:0 50%;transform:scaleX(0.9710);">W</span>
<span class="t" style="top:365.34px;font-size:12px;line-height:16px;color:#f2f2f2;right:66px;transform-origin:100% 50%;">36</span>
<span class="t" style="top:365.34px;font-size:12px;line-height:16px;color:#f2f2f2;left:1210.5px;transform-origin:0 50%;transform:scaleX(0.9225);">H</span>
<div style="left:986px;top:391px;width:85px;height:29px;background:#2b2c2d;border:1px solid #1d1d1d;"></div>
<span class="t" style="top:399.34px;font-size:12px;line-height:16px;color:#f2f2f2;right:317px;transform-origin:100% 50%;transform:scaleX(1.0066);">Rotation</span>
<span class="t" style="top:399.34px;font-size:12px;line-height:16px;color:#f2f2f2;right:197.29999999999995px;transform-origin:100% 50%;transform:scaleX(0.8904);">0.00</span>
<span class="t" style="top:399.84px;font-size:12px;line-height:16px;color:#f2f2f2;left:1080.5px;transform-origin:0 50%;">°</span>
<div style="left:986px;top:425px;width:216px;height:29px;background:#2b2c2d;border:1px solid #1d1d1d;"></div>
<span class="t" style="top:433.34px;font-size:12px;line-height:16px;color:#f2f2f2;right:317px;transform-origin:100% 50%;transform:scaleX(0.8991);">Scale</span>
<span class="t" style="top:433.34px;font-size:12px;line-height:16px;color:#f2f2f2;right:94.40000000000009px;transform-origin:100% 50%;transform:scaleX(0.8904);">1.00</span>
<svg style="left:1181px;top:436px;" width="13" height="8" viewBox="0 0 13 8"><path d="M.8 .8L6.4 6.6L12 .8" stroke="#fff" stroke-width="1.3" fill="none"/></svg>
<span class="t" style="top:433.34px;font-size:12px;line-height:16px;color:#f2f2f2;left:1209.5px;transform-origin:0 50%;transform:scaleX(0.9558);">%</span>
<div style="left:986px;top:459px;width:85px;height:29px;background:#2b2c2d;border:1px solid #1d1d1d;"></div>
<span class="t" style="top:467.34px;font-size:12px;line-height:16px;color:#f2f2f2;right:317px;transform-origin:100% 50%;transform:scaleX(0.9568);">Z stack</span>
<span class="t" style="top:467.34px;font-size:12px;line-height:16px;color:#f2f2f2;right:197.29999999999995px;transform-origin:100% 50%;">0</span>
<div style="left:986px;top:493px;width:29px;height:29px;background:#2b2c2d;border:1px solid #1d1d1d;"></div>
<span class="t" style="top:501.34px;font-size:12px;line-height:16px;color:#f2f2f2;right:317px;transform-origin:100% 50%;transform:scaleX(1.0307);">Origin</span>
<div style="left:996px;top:503px;width:9px;height:9px;background:#2aafd3;"></div>
<div style="left:857px;top:532px;width:394px;height:21px;background:#1f1f1f;"></div>
<svg style="left:861px;top:540.5px;" width="9" height="5" viewBox="0 0 9 5"><path d="M.4 0H8L4.2 4.4Z" fill="#c0c0c0"/></svg>
<span class="t" style="top:535.74px;font-size:12.3px;line-height:16px;color:#f2f2f2;left:879px;transform-origin:0 50%;transform:scaleX(0.8549);">VISIBILITY</span>
<div style="left:986px;top:563px;width:29px;height:29px;background:#2b2c2d;border:1px solid #1d1d1d;"></div>
<div style="left:1117px;top:563px;width:29px;height:29px;background:#2b2c2d;border:1px solid #1d1d1d;"></div>
<span class="t" style="top:571.34px;font-size:12px;line-height:16px;color:#f2f2f2;right:317px;transform-origin:100% 50%;transform:scaleX(1.0319);">Visibility</span>
<svg style="left:993px;top:571px;" width="16" height="12" viewBox="0 0 16 12"><path d="M1.4 6L5.8 10.2L14 1.6" stroke="#fff" stroke-width="1.8" fill="none"/></svg>
<span class="t" style="top:571.34px;font-size:12px;line-height:16px;color:#f2f2f2;left:1021.4px;transform-origin:0 50%;transform:scaleX(0.9562);">Visible</span>
<span class="t" style="top:571.34px;font-size:12px;line-height:16px;color:#f2f2f2;left:1152px;transform-origin:0 50%;transform:scaleX(0.9675);">Clip</span>
<div style="left:986px;top:597px;width:216px;height:29px;background:#2b2c2d;border:1px solid #1d1d1d;"></div>
<span class="t" style="top:605.34px;font-size:12px;line-height:16px;color:#f2f2f2;right:317px;transform-origin:100% 50%;transform:scaleX(1.0077);">Opacity</span>
<span class="t" style="top:605.34px;font-size:12px;line-height:16px;color:#f2f2f2;right:94.40000000000009px;transform-origin:100% 50%;transform:scaleX(0.8904);">1.00</span>
<svg style="left:1181px;top:608px;" width="13" height="8" viewBox="0 0 13 8"><path d="M.8 .8L6.4 6.6L12 .8" stroke="#fff" stroke-width="1.3" fill="none"/></svg>
<div style="left:857px;top:640px;width:202px;height:24px;background:#2e2f30;border:1px solid #2aafd3;"></div>
<div style="left:1058.5px;top:640px;width:192.5px;height:24px;background:#2aafd3;"></div>
<span class="t" style="top:644.70px;font-size:12.4px;line-height:16px;color:#2aafd3;left:946.13px;transform-origin:50% 50%;transform:scaleX(0.9457);">Text</span>
<span class="t" style="top:644.70px;font-size:12.4px;line-height:16px;color:#26363c;left:1140.90px;transform-origin:50% 50%;transform:scaleX(0.9677);">Layout</span>
<div style="left:857px;top:664.5px;width:394px;height:20.5px;background:#1f1f1f;"></div>
<svg style="left:861px;top:672.75px;" width="9" height="5" viewBox="0 0 9 5"><path d="M.4 0H8L4.2 4.4Z" fill="#c0c0c0"/></svg>
<span class="t" style="top:667.74px;font-size:12.3px;line-height:16px;color:#f2f2f2;left:879px;transform-origin:0 50%;transform:scaleX(0.8696);">LAYOUT</span>
<div style="left:986px;top:694.8px;width:29px;height:20px;background:#2b2c2d;border:1px solid #1d1d1d;"></div>
<div style="left:1014px;top:694.8px;width:29px;height:20px;background:#2b2c2d;border:1px solid #1d1d1d;"></div>
<div style="left:1042px;top:694.8px;width:29px;height:20px;background:#2b2c2d;border:1px solid #1d1d1d;"></div>
<div style="left:1070px;top:694.8px;width:29px;height:20px;background:#2b2c2d;border:1px solid #1d1d1d;"></div>
<div style="left:1115px;top:694.8px;width:29px;height:20px;background:#2b2c2d;border:1px solid #1d1d1d;"></div>
<div style="left:1160px;top:694.8px;width:29px;height:20px;background:#2b2c2d;border:1px solid #1d1d1d;"></div>
<div style="left:1188px;top:694.8px;width:29px;height:20px;background:#2b2c2d;border:1px solid #1d1d1d;"></div>
<div style="left:994px;top:702.8px;width:12px;height:1.4px;background:#c0c0c0;"></div>
<div style="left:1022px;top:702.8px;width:12px;height:1.4px;background:#c0c0c0;"></div>
<div style="left:1050px;top:702.8px;width:12px;height:1.4px;background:#c0c0c0;"></div>
<div style="left:1078px;top:702.8px;width:12px;height:1.4px;background:#c0c0c0;"></div>
<div style="left:1123px;top:702.8px;width:12px;height:1.4px;background:#c0c0c0;"></div>
<div style="left:1169px;top:702.8px;width:10.4px;height:1.4px;background:#2aafd3;"></div>
<div style="left:1201.8px;top:702.8px;width:1.3px;height:2px;background:#2aafd3;"></div>
<div style="left:1251px;top:100px;width:10px;height:604px;background:#3e3e3e;"></div>
<div style="left:1251px;top:116px;width:10px;height:409px;background:#4d4d4d;"></div>
<div style="left:1261px;top:0px;width:1px;height:732px;background:#6e6e6e;"></div>
<div style="left:40px;top:704px;width:1222px;height:28px;background:#1f1f1f;"></div>
<div style="left:0px;top:731px;width:1262px;height:1px;background:#6e6e6e;"></div>
<svg style="left:48px;top:713px;" width="13" height="13" viewBox="0 0 13 13"><rect x=".8" y=".8" width="10.6" height="10.6" stroke="#6e6e6e" stroke-width="1.2" fill="none"/><rect x=".8" y=".8" width="4.4" height="10.6" fill="#6e6e6e"/></svg>
<div style="left:72px;top:707.5px;width:200px;height:21.5px;background:#2a2b2c;"></div>
<svg style="left:78px;top:709px;" width="18" height="18" viewBox="0 0 18 18"><circle cx="10.6" cy="7.6" r="4.3" stroke="#a8a8a8" stroke-width="1.2" fill="none"/><path d="M7.6 10.8L1.6 16.8" stroke="#a8a8a8" stroke-width="1.4"/><path d="M11.6 14.6H15.6L13.6 16.8Z" fill="#a8a8a8"/></svg>
<span class="t" style="top:711.84px;font-size:12px;line-height:16px;color:#858585;left:100px;transform-origin:0 50%;transform:scaleX(0.9689);">Type to locate (Ctrl+K)</span>
<div style="left:275px;top:708px;width:1px;height:21px;background:#7c7c7c;"></div>
<span class="t" style="top:711.84px;font-size:12px;line-height:16px;color:#f2f2f2;left:285.5px;transform-origin:0 50%;transform:scaleX(0.6729);">1</span>
<span class="t" style="top:711.84px;font-size:12px;line-height:16px;color:#f2f2f2;left:299px;transform-origin:0 50%;transform:scaleX(0.8937);">Issues</span>
<span class="t" style="top:711.84px;font-size:12px;line-height:16px;color:#f2f2f2;left:347px;transform-origin:0 50%;transform:scaleX(0.8224);">2</span>
<span class="t" style="top:711.84px;font-size:12px;line-height:16px;color:#f2f2f2;left:361px;transform-origin:0 50%;transform:scaleX(0.9217);">Search Results</span>
<span class="t" style="top:711.84px;font-size:12px;line-height:16px;color:#f2f2f2;left:453px;transform-origin:0 50%;transform:scaleX(0.8224);">3</span>
<span class="t" style="top:711.84px;font-size:12px;line-height:16px;color:#f2f2f2;left:467px;transform-origin:0 50%;transform:scaleX(1.0402);">Application Output</span>
<span class="t" style="top:711.84px;font-size:12px;line-height:16px;color:#f2f2f2;left:587px;transform-origin:0 50%;transform:scaleX(0.8224);">5</span>
<span class="t" style="top:711.84px;font-size:12px;line-height:16px;color:#f2f2f2;left:600.5px;transform-origin:0 50%;transform:scaleX(0.9847);">QML Debugger Console</span>
<svg style="left:745.5px;top:714px;" width="8.5" height="11" viewBox="0 0 8.5 11"><path d="M0 4.2L4.25 0L8.5 4.2Z M0 6.6L4.25 10.8L8.5 6.6Z" fill="#d0d0d0"/></svg>
<div style="left:1183px;top:708px;width:24px;height:21px;background:#111;"></div>
<svg style="left:1186px;top:710px;" width="18" height="16" viewBox="0 0 18 16"><rect x="2.4" y="8.4" width="13.2" height="3.6" rx="1.6" stroke="#e0e0e0" stroke-width="1" fill="#8a8a8a"/><rect x="10.6" y="9" width="4.4" height="2.4" rx="1" fill="#111"/><path d="M11 4L13.5 1.4L16 4Z" fill="#e0e0e0"/></svg>
<svg style="left:1220px;top:713px;" width="12" height="12" viewBox="0 0 12 12"><rect x=".6" y=".6" width="10.4" height="10.4" stroke="#6e6e6e" stroke-width="1.1" fill="none"/><rect x="6" y=".6" width="5" height="10.4" fill="#6e6e6e"/></svg>
<svg style="left:1245px;top:715px;" width="16" height="16" viewBox="0 0 16 16"><path d="M16 0L0 16M16 4L4 16M16 8L8 16M16 12L12 16" stroke="#3c3c3c" stroke-width="1"/></svg>
<svg style="left:1010px;top:190px;" width="70" height="88" viewBox="0 0 70 88"><polygon points="25.0,3.8 32.0,3.8 32.0,6.8 35.1,6.8 35.1,23.8 41.4,23.8 41.4,27.2 52.0,27.2 52.0,31.0 58.8,31.0 58.8,34.0 62.0,34.0 62.0,37.0 65.2,37.0 65.2,64.5 62.0,64.5 62.0,74.0 58.9,74.0 58.9,83.6 21.6,83.6 21.6,73.6 17.8,73.6 17.8,66.4 14.6,66.4 14.6,59.3 11.1,59.3 11.1,51.4 8.3,51.4 8.3,47.6 5.5,47.6 5.5,36.2 18.7,36.2 18.7,39.7 21.9,39.7 21.9,6.8 25.0,6.8" fill="#000" stroke="#e6e6e6" stroke-width="1.8" stroke-linejoin="miter"/><polygon points="25.0,3.8 32.0,3.8 32.0,6.8 35.1,6.8 35.1,23.8 41.4,23.8 41.4,27.2 52.0,27.2 52.0,31.0 58.8,31.0 58.8,34.0 62.0,34.0 62.0,37.0 65.2,37.0 65.2,64.5 62.0,64.5 62.0,74.0 58.9,74.0 58.9,83.6 21.6,83.6 21.6,73.6 17.8,73.6 17.8,66.4 14.6,66.4 14.6,59.3 11.1,59.3 11.1,51.4 8.3,51.4 8.3,47.6 5.5,47.6 5.5,36.2 18.7,36.2 18.7,39.7 21.9,39.7 21.9,6.8 25.0,6.8" fill="#000"/><polygon points="25.0,6.8 32.1,6.8 32.1,26.5 41.4,26.5 41.4,29.9 52.0,29.9 52.0,33.5 58.9,33.5 58.9,36.9 62.0,36.9 62.0,64.5 58.9,64.5 58.9,74.0 55.7,74.0 55.7,80.8 24.9,80.8 24.9,73.6 21.6,73.6 21.6,66.4 17.8,66.4 17.8,59.3 14.6,59.3 14.6,51.4 11.1,51.4 11.1,47.6 8.6,47.6 8.6,39.3 18.7,39.3 18.7,43.1 25.0,43.1" fill="#fff"/><rect x="21.9" y="39.7" width="3.1" height="13.0" fill="#000"/><rect x="32.1" y="23.0" width="3.0" height="17.0" fill="#000"/><rect x="41.4" y="27.0" width="3.1" height="13.0" fill="#000"/><rect x="52.0" y="30.5" width="3.1" height="13.2" fill="#000"/></svg>
</body></html>
